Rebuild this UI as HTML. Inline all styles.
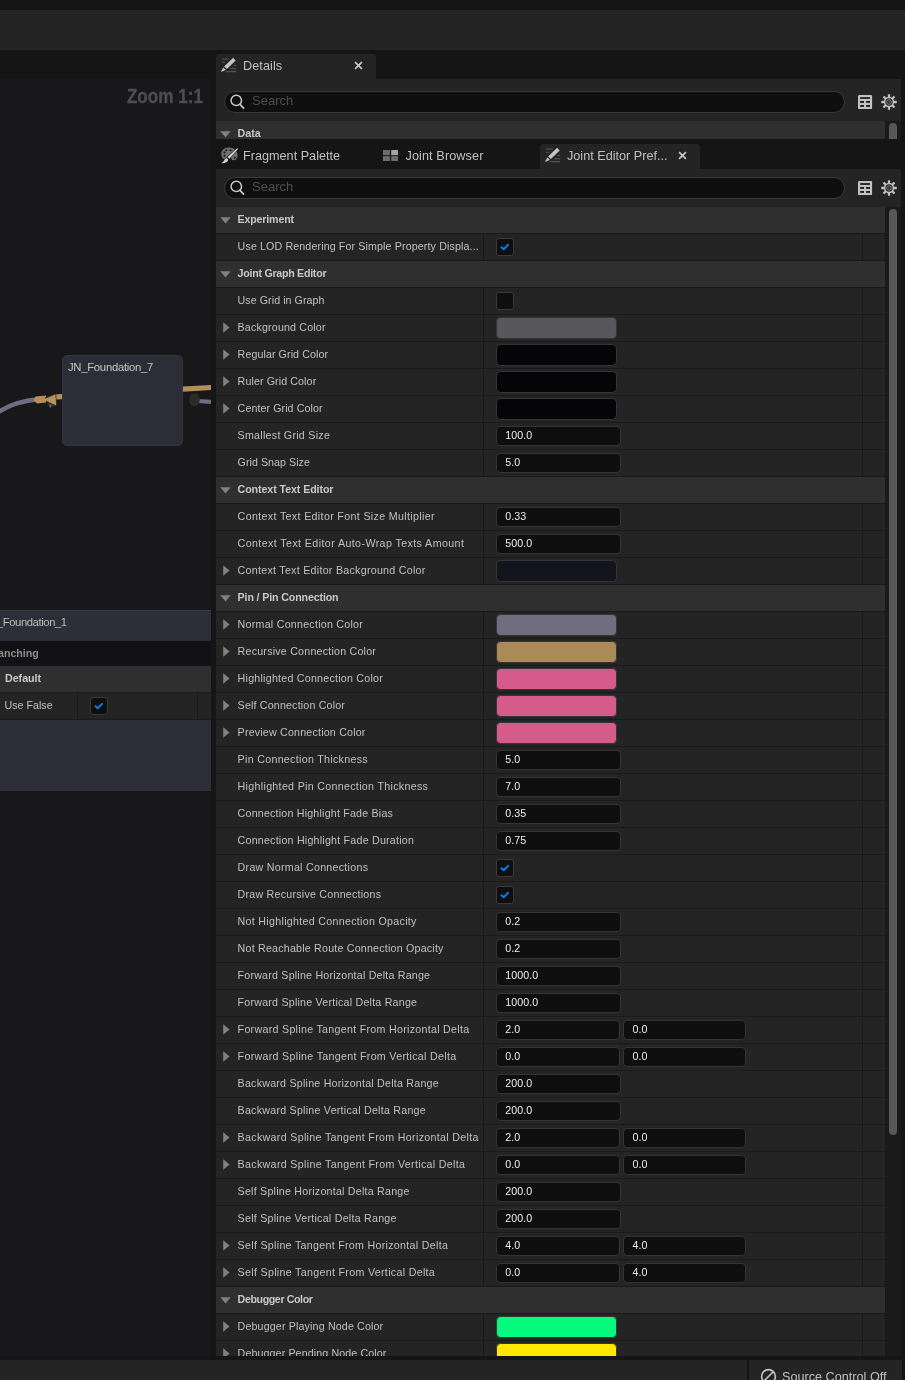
<!DOCTYPE html><html><head><meta charset="utf-8"><title>Details</title><style>
html,body{margin:0;padding:0}
body{width:905px;height:1380px;overflow:hidden;position:relative;background:#151515;font-family:"Liberation Sans",sans-serif;color:#c0c0c0}
div,span,i,svg{position:absolute;display:block;box-sizing:border-box}
.topbar{left:0;top:10px;width:905px;height:40px;background:#242424}
.graph{left:0;top:79px;width:211px;height:1277px;background:#18181a;overflow:hidden}
.zoom{right:8.6px;top:5px;font-size:20px;line-height:24px;font-weight:700;color:#4e4e50;white-space:nowrap;transform:scaleX(.855);transform-origin:100% 50%;-webkit-text-stroke:.3px #4e4e50}
.node{left:62px;top:276px;width:121px;height:91px;background:#2c2d36;border:1px solid #34353e;border-radius:5px}
.node span{left:5px;top:4px;font-size:11.3px;line-height:14px;color:#c4c4c4;white-space:nowrap;letter-spacing:-.28px}
.big{left:0;top:531px;width:211px;height:181px;background:#2d2e38;box-shadow:inset 0 1px 0 #3a3b46}
.big .t{left:-3.2px;top:5px;font-size:11.3px;line-height:14px;color:#bcbcbc;white-space:nowrap;letter-spacing:-.42px}
.big .br{left:0;top:31px;width:211px;height:25px;background:#121216}
.big .br span{left:-2px;top:5px;font-size:10.67px;line-height:14px;font-weight:700;color:#8c8c8c;white-space:nowrap}
.big .dh{left:0;top:56px;width:211px;height:26px;background:#2f2f2f}
.big .dh span{left:5px;top:5px;font-size:10.67px;line-height:14px;font-weight:700;color:#c8c8c8;white-space:nowrap}
.big .ur{left:0;top:83px;width:211px;height:26px;background:#242424}
.big .ur .l{left:4.6px;top:5px;font-size:10.67px;line-height:14px;white-space:nowrap}
.big .ur i{top:0;width:1px;height:26px;background:#1a1a1a}
.big .sp{left:0;top:82px;width:211px;height:1px;background:#1a1a1a}
.big .sp2{left:0;top:109px;width:211px;height:1px;background:#1a1a1a}
.tab{height:25px;background:#242424;border-radius:4px 4px 0 0}
.tl{font-size:12.67px;line-height:16px;white-space:nowrap;color:#c0c0c0}
.panel{background:#242424}
.sf{left:8px;width:621px;height:22px;border-radius:11px;background:#0f0f0f;border:1px solid #383838}
.sf .ph{left:27px;top:1px;font-size:13px;line-height:16px;color:#4e4e4e;white-space:nowrap}
.si{left:5px;top:1.9px}
.row{left:216px;width:669px;height:26px;background:#242424}
.row.hd{background:#2f2f2f}
.lb{left:21.6px;top:5px;font-size:10.67px;line-height:14px;white-space:nowrap;color:#c0c0c0}
.lb.b{font-weight:700;color:#c8c8c8}
.ad{left:4.3px;top:9.6px}
.ar{left:6.8px;top:7.4px}
.d1{left:267px;top:0;width:1px;height:26px;background:#1a1a1a}
.d2{left:646px;top:0;width:1px;height:26px;background:#1a1a1a}
.cb{left:280.3px;top:4.1px;width:17.5px;height:17.5px;border-radius:3px;background:#0f0f0f;border:1px solid #3a3a3a}
.ck{left:-1px;top:-1px}
.sw{left:280.2px;top:2.3px;width:120.4px;height:21.3px;border-radius:4.5px;border:1px solid #353535}
.nf{top:3.2px;height:19.7px;border-radius:4px;background:#0f0f0f;border:1px solid #343434;font-size:10.67px;line-height:16px;color:#ececec;padding-left:8px;letter-spacing:.1px;white-space:nowrap}
.n1{left:280.2px;width:124.4px}
.n2a{left:280.2px;width:123.8px}
.n2b{left:407.4px;width:122.2px}
.track{left:885px;width:16px;background:#1a1a1a}
.thumb{left:4px;width:8px;border-radius:4px;background:#585858}
.status{top:1360px;height:20px;background:#242424}
</style></head><body>
<div id="w" style="left:0;top:0;width:905px;height:1380px;will-change:transform">
<div class="topbar"></div>
<div class="graph">
<svg width="211" height="1277" viewBox="0 79 211 1277" style="left:0;top:0">
<path d="M-2 412.4 C7 406.2 19 401.2 38 399.3" fill="none" stroke="#6d6c82" stroke-width="4.4"/>
<path d="M33.6 400.6 L35.4 396.6 L46 395.6 L46 402.5 L37.1 403.4 Z" fill="#b48f58"/>
<path d="M44.8 397.4 L55.9 393.6 L57 404.4 L50 408.4 L47.6 403.5 Z" fill="#303036"/>
<path d="M49 405.2 L50.4 408 L51.4 404.6 Z" fill="#6d6c82"/>
<path d="M43.6 399.4 L55.4 394.4 L56.2 405.6 Z" fill="#b8935a"/>
<path d="M56.2 394.2 L62 393.9 L62 399.2 L56.4 399.5 Z" fill="#b48f58"/>
<path d="M183 386.6 L211 385 L211 390 L183 391.8 Z" fill="#b48f58"/>
<path d="M197 401 L211 401.8" stroke="#6d6c82" stroke-width="4.2" fill="none"/>
<rect x="189.3" y="393.6" width="10.2" height="12.6" rx="4.8" fill="#2b2b2b"/>
</svg>
<span class="zoom">Zoom 1:1</span>
<div class="node"><span id="nodeT">JN_Foundation_7</span></div>
<div class="big"><span class="t" id="bigT">_Foundation_1</span>
<div class="br"><span id="brT">anching</span></div>
<div class="dh"><span id="dhT">Default</span></div>
<div class="sp"></div>
<div class="ur"><span class="l" id="urT">Use False</span><i style="left:77px"></i><i style="left:197px"></i><span class="cb" style="left:90px"><svg class="ck" width="18" height="18" viewBox="0 0 18 18"><path d="M5.5 9.2 L7.7 11.3 L12.1 6.9" fill="none" stroke="#0a7cf0" stroke-width="2" stroke-linecap="round" stroke-linejoin="round"/></svg></span></div>
<div class="sp2"></div>
</div>
</div>
<div class="tab" style="left:216px;top:54px;width:160px"><svg class="pen" style="left:4.2px;top:3px" width="17" height="16" viewBox="0 0 17 16">
<g stroke="#4c4c4c" stroke-width="1.3"><path d="M1.9 2.05H8.7M1.9 5.4H5.1"/></g>
<g stroke="#555" stroke-width="1.2"><path d="M13.4 8.5H16.1M10.2 11.6H16.1M6.2 14.7H16.1"/></g>
<path d="M13.1 0.7 L15.7 3.4 L6.9 12.0 L4.1 9.4 Z" fill="#c4c4c4"/>
<path d="M3.4 10.5 L5.9 13.1 L0.8 14.9 Z" fill="#c4c4c4"/>
</svg><span class="tl" id="T0" style="left:27px;top:4px;letter-spacing:.08px">Details</span><svg class="cx" style="left:137.5px;top:7.1px" width="9" height="9" viewBox="0 0 9 9"><path d="M1.1 1.1 L7.9 7.9 M7.9 1.1 L1.1 7.9" stroke="#c8c8c8" stroke-width="1.7" fill="none"/></svg></div>
<div class="panel" style="left:216px;top:79px;width:685px;height:60px"><div class="sf" style="top:12px"><svg class="si" width="15" height="16" viewBox="0 0 15 16"><circle cx="6.3" cy="6.4" r="5.2" fill="none" stroke="#c8c8c8" stroke-width="1.5"/><path d="M10 10.3 L13.6 14.1" stroke="#c8c8c8" stroke-width="1.7" stroke-linecap="round"/></svg><span class="ph">Search</span></div><svg class="ti" style="left:642px;top:15.9px;overflow:visible" width="14" height="14" viewBox="0 0 14 14"><rect x="0" y="0" width="14.1" height="14.1" rx="1.2" fill="#c2c2c2"/>
<g fill="#0c0c0c"><rect x="2.1" y="2.2" width="9.9" height="1.6"/><rect x="2.1" y="6.1" width="3.9" height="1.7"/><rect x="8.1" y="6.1" width="3.9" height="1.7"/><rect x="2.1" y="10.1" width="3.9" height="1.7"/><rect x="8.1" y="10.1" width="3.9" height="1.7"/></g></svg><svg class="gi" style="left:665.2px;top:14.7px" width="16" height="16" viewBox="0 0 16 16"><g fill="#c2c2c2"><rect x="-1.15" y="-7.8" width="2.3" height="3.6" rx="0.4" transform="translate(8.0 8.0) rotate(0)"/><rect x="-1.15" y="-7.8" width="2.3" height="3.6" rx="0.4" transform="translate(8.0 8.0) rotate(45)"/><rect x="-1.15" y="-7.8" width="2.3" height="3.6" rx="0.4" transform="translate(8.0 8.0) rotate(90)"/><rect x="-1.15" y="-7.8" width="2.3" height="3.6" rx="0.4" transform="translate(8.0 8.0) rotate(135)"/><rect x="-1.15" y="-7.8" width="2.3" height="3.6" rx="0.4" transform="translate(8.0 8.0) rotate(180)"/><rect x="-1.15" y="-7.8" width="2.3" height="3.6" rx="0.4" transform="translate(8.0 8.0) rotate(225)"/><rect x="-1.15" y="-7.8" width="2.3" height="3.6" rx="0.4" transform="translate(8.0 8.0) rotate(270)"/><rect x="-1.15" y="-7.8" width="2.3" height="3.6" rx="0.4" transform="translate(8.0 8.0) rotate(315)"/></g>
<circle cx="8" cy="8" r="4.4" fill="none" stroke="#c2c2c2" stroke-width="1.5"/><circle cx="8" cy="8" r="2.3" fill="none" stroke="#8a8a8a" stroke-width="0.9"/><circle cx="8" cy="8" r="1.2" fill="#444"/></svg><div style="left:0;top:42px;width:669px;height:18px;background:#2f2f2f;overflow:hidden"><svg class="ad" style="top:9.7px" width="11" height="7" viewBox="0 0 11 7"><path d="M0.3 0.3 L10.7 0.3 L5.5 6.6 Z" fill="#808080"/></svg><span class="lb b" id="DataL" style="top:4.5px">Data</span></div><div class="track" style="left:669px;top:42px;height:18px;overflow:hidden"><div class="thumb" style="top:1.6px;height:40px"></div></div></div>
<div style="left:216px;top:144px;width:160px;height:25px"><svg class="pal" style="left:4.6px;top:2.6px" width="18" height="17" viewBox="0 0 18 17">
<path d="M7.6 0.5 C3.2 0.5 0.3 3.4 0.3 6.9 C0.3 10.2 2.6 12.6 5.4 12.9 L8 10.4 L10.2 10.4 C10 11.6 10.6 13.2 12.6 13.3 C14.8 13.3 16.6 11.4 16.6 8.4 C16.6 3.8 12.6 0.5 7.6 0.5 Z" fill="#707070"/>
<g fill="#161616"><circle cx="5.3" cy="3.2" r="1.05"/><circle cx="9.5" cy="3.2" r="1.05"/><circle cx="3.4" cy="5.5" r="1.05"/><circle cx="3.4" cy="8.7" r="1.05"/><path d="M13.8 9.6 L15 10.8 L13.8 12 L12.6 10.8 Z"/></g>
<path d="M16.4 0.5 L17.6 1.7 L8.4 12.6 L5.6 10 Z" fill="#161616"/>
<path d="M16.2 1.3 L17 2.1 L8.4 11.7 L6.5 9.9 Z" fill="#d4d4d4"/>
<path d="M5.2 10.2 L8 12.8 C7.4 15.6 4.2 17 0.2 16.4 C2.7 15.2 3 11.8 5.2 10.2 Z" fill="#161616"/>
<path d="M5.5 11.1 L7.3 12.8 C6.6 15.2 3.6 16.4 0.5 16.1 C2.9 15 3.5 12.2 5.5 11.1 Z" fill="#d4d4d4"/>
</svg><span class="tl" id="T1" style="left:27px;top:4px">Fragment Palette</span></div>
<div style="left:378px;top:144px;width:160px;height:25px"><svg class="g4" style="left:4.9px;top:6px" width="16" height="12" viewBox="0 0 16 12"><rect x="0" y="0" width="6.9" height="5.2" fill="#6c6c6c"/><rect x="8.2" y="0" width="6.8" height="5.2" fill="#a4a4a4"/><rect x="0" y="6.2" width="6.9" height="4.8" fill="#6c6c6c"/><rect x="8.2" y="6.2" width="6.8" height="4.8" fill="#6c6c6c"/></svg><span class="tl" id="T2" style="left:27.5px;top:4px;letter-spacing:.1px">Joint Browser</span></div>
<div class="tab" style="left:540px;top:144px;width:160px"><svg class="pen" style="left:4.2px;top:3px" width="17" height="16" viewBox="0 0 17 16">
<g stroke="#4c4c4c" stroke-width="1.3"><path d="M1.9 2.05H8.7M1.9 5.4H5.1"/></g>
<g stroke="#555" stroke-width="1.2"><path d="M13.4 8.5H16.1M10.2 11.6H16.1M6.2 14.7H16.1"/></g>
<path d="M13.1 0.7 L15.7 3.4 L6.9 12.0 L4.1 9.4 Z" fill="#c4c4c4"/>
<path d="M3.4 10.5 L5.9 13.1 L0.8 14.9 Z" fill="#c4c4c4"/>
</svg><span class="tl" id="T3" style="left:27px;top:4px">Joint Editor Pref...</span><svg class="cx" style="left:137.5px;top:7.1px" width="9" height="9" viewBox="0 0 9 9"><path d="M1.1 1.1 L7.9 7.9 M7.9 1.1 L1.1 7.9" stroke="#c8c8c8" stroke-width="1.7" fill="none"/></svg></div>
<div class="panel" style="left:216px;top:169px;width:685px;height:1187px"><div class="sf" style="top:8px"><svg class="si" width="15" height="16" viewBox="0 0 15 16"><circle cx="6.3" cy="6.4" r="5.2" fill="none" stroke="#c8c8c8" stroke-width="1.5"/><path d="M10 10.3 L13.6 14.1" stroke="#c8c8c8" stroke-width="1.7" stroke-linecap="round"/></svg><span class="ph">Search</span></div><svg class="ti" style="left:642px;top:11.9px;overflow:visible" width="14" height="14" viewBox="0 0 14 14"><rect x="0" y="0" width="14.1" height="14.1" rx="1.2" fill="#c2c2c2"/>
<g fill="#0c0c0c"><rect x="2.1" y="2.2" width="9.9" height="1.6"/><rect x="2.1" y="6.1" width="3.9" height="1.7"/><rect x="8.1" y="6.1" width="3.9" height="1.7"/><rect x="2.1" y="10.1" width="3.9" height="1.7"/><rect x="8.1" y="10.1" width="3.9" height="1.7"/></g></svg><svg class="gi" style="left:665.2px;top:10.7px" width="16" height="16" viewBox="0 0 16 16"><g fill="#c2c2c2"><rect x="-1.15" y="-7.8" width="2.3" height="3.6" rx="0.4" transform="translate(8.0 8.0) rotate(0)"/><rect x="-1.15" y="-7.8" width="2.3" height="3.6" rx="0.4" transform="translate(8.0 8.0) rotate(45)"/><rect x="-1.15" y="-7.8" width="2.3" height="3.6" rx="0.4" transform="translate(8.0 8.0) rotate(90)"/><rect x="-1.15" y="-7.8" width="2.3" height="3.6" rx="0.4" transform="translate(8.0 8.0) rotate(135)"/><rect x="-1.15" y="-7.8" width="2.3" height="3.6" rx="0.4" transform="translate(8.0 8.0) rotate(180)"/><rect x="-1.15" y="-7.8" width="2.3" height="3.6" rx="0.4" transform="translate(8.0 8.0) rotate(225)"/><rect x="-1.15" y="-7.8" width="2.3" height="3.6" rx="0.4" transform="translate(8.0 8.0) rotate(270)"/><rect x="-1.15" y="-7.8" width="2.3" height="3.6" rx="0.4" transform="translate(8.0 8.0) rotate(315)"/></g>
<circle cx="8" cy="8" r="4.4" fill="none" stroke="#c2c2c2" stroke-width="1.5"/><circle cx="8" cy="8" r="2.3" fill="none" stroke="#8a8a8a" stroke-width="0.9"/><circle cx="8" cy="8" r="1.2" fill="#444"/></svg><div style="left:0;top:38px;width:669px;height:1149px;background:#1a1a1a"></div><div class="track" style="left:669px;top:38px;height:1149px"><div class="thumb" style="top:2px;height:926px"></div></div></div>
<div style="left:0;top:0;width:905px;height:1356px;overflow:hidden;background:transparent">
<div class="row hd" style="top:207px"><svg class="ad" width="11" height="7" viewBox="0 0 11 7"><path d="M0.3 0.3 L10.7 0.3 L5.5 6.6 Z" fill="#808080"/></svg><span class="lb b" id="L0" style="letter-spacing:-0.177px">Experiment</span></div>
<div class="row" style="top:234px"><span class="lb" id="L1" style="letter-spacing:0.13px">Use LOD Rendering For Simple Property Displa...</span><i class="d1"></i><i class="d2"></i><span class="cb"><svg class="ck" width="18" height="18" viewBox="0 0 18 18"><path d="M5.5 9.2 L7.7 11.3 L12.1 6.9" fill="none" stroke="#0a7cf0" stroke-width="2" stroke-linecap="round" stroke-linejoin="round"/></svg></span></div>
<div class="row hd" style="top:261px"><svg class="ad" width="11" height="7" viewBox="0 0 11 7"><path d="M0.3 0.3 L10.7 0.3 L5.5 6.6 Z" fill="#808080"/></svg><span class="lb b" id="L2" style="letter-spacing:-0.271px">Joint Graph Editor</span></div>
<div class="row" style="top:288px"><span class="lb" id="L3" style="letter-spacing:0.062px">Use Grid in Graph</span><i class="d1"></i><i class="d2"></i><span class="cb"></span></div>
<div class="row" style="top:315px"><svg class="ar" width="7" height="11" viewBox="0 0 7 11"><path d="M0.2 0.3 L6.6 5.5 L0.2 10.7 Z" fill="#808080"/></svg><span class="lb" id="L4" style="letter-spacing:0.173px">Background Color</span><i class="d1"></i><i class="d2"></i><span class="sw" style="background:#58585c"></span></div>
<div class="row" style="top:342px"><svg class="ar" width="7" height="11" viewBox="0 0 7 11"><path d="M0.2 0.3 L6.6 5.5 L0.2 10.7 Z" fill="#808080"/></svg><span class="lb" id="L5" style="letter-spacing:0.094px">Regular Grid Color</span><i class="d1"></i><i class="d2"></i><span class="sw" style="background:#050508"></span></div>
<div class="row" style="top:369px"><svg class="ar" width="7" height="11" viewBox="0 0 7 11"><path d="M0.2 0.3 L6.6 5.5 L0.2 10.7 Z" fill="#808080"/></svg><span class="lb" id="L6" style="letter-spacing:0.107px">Ruler Grid Color</span><i class="d1"></i><i class="d2"></i><span class="sw" style="background:#050508"></span></div>
<div class="row" style="top:396px"><svg class="ar" width="7" height="11" viewBox="0 0 7 11"><path d="M0.2 0.3 L6.6 5.5 L0.2 10.7 Z" fill="#808080"/></svg><span class="lb" id="L7" style="letter-spacing:0.088px">Center Grid Color</span><i class="d1"></i><i class="d2"></i><span class="sw" style="background:#050508"></span></div>
<div class="row" style="top:423px"><span class="lb" id="L8" style="letter-spacing:0.271px">Smallest Grid Size</span><i class="d1"></i><i class="d2"></i><span class="nf n1">100.0</span></div>
<div class="row" style="top:450px"><span class="lb" id="L9" style="letter-spacing:0.046px">Grid Snap Size</span><i class="d1"></i><i class="d2"></i><span class="nf n1">5.0</span></div>
<div class="row hd" style="top:477px"><svg class="ad" width="11" height="7" viewBox="0 0 11 7"><path d="M0.3 0.3 L10.7 0.3 L5.5 6.6 Z" fill="#808080"/></svg><span class="lb b" id="L10" style="letter-spacing:-0.089px">Context Text Editor</span></div>
<div class="row" style="top:504px"><span class="lb" id="L11" style="letter-spacing:0.349px">Context Text Editor Font Size Multiplier</span><i class="d1"></i><i class="d2"></i><span class="nf n1">0.33</span></div>
<div class="row" style="top:531px"><span class="lb" id="L12" style="letter-spacing:0.405px">Context Text Editor Auto-Wrap Texts Amount</span><i class="d1"></i><i class="d2"></i><span class="nf n1">500.0</span></div>
<div class="row" style="top:558px"><svg class="ar" width="7" height="11" viewBox="0 0 7 11"><path d="M0.2 0.3 L6.6 5.5 L0.2 10.7 Z" fill="#808080"/></svg><span class="lb" id="L13" style="letter-spacing:0.275px">Context Text Editor Background Color</span><i class="d1"></i><i class="d2"></i><span class="sw" style="background:#14141e"></span></div>
<div class="row hd" style="top:585px"><svg class="ad" width="11" height="7" viewBox="0 0 11 7"><path d="M0.3 0.3 L10.7 0.3 L5.5 6.6 Z" fill="#808080"/></svg><span class="lb b" id="L14" style="letter-spacing:-0.137px">Pin / Pin Connection</span></div>
<div class="row" style="top:612px"><svg class="ar" width="7" height="11" viewBox="0 0 7 11"><path d="M0.2 0.3 L6.6 5.5 L0.2 10.7 Z" fill="#808080"/></svg><span class="lb" id="L15" style="letter-spacing:0.255px">Normal Connection Color</span><i class="d1"></i><i class="d2"></i><span class="sw" style="background:#6f6e7f"></span></div>
<div class="row" style="top:639px"><svg class="ar" width="7" height="11" viewBox="0 0 7 11"><path d="M0.2 0.3 L6.6 5.5 L0.2 10.7 Z" fill="#808080"/></svg><span class="lb" id="L16" style="letter-spacing:0.224px">Recursive Connection Color</span><i class="d1"></i><i class="d2"></i><span class="sw" style="background:#aa8a57"></span></div>
<div class="row" style="top:666px"><svg class="ar" width="7" height="11" viewBox="0 0 7 11"><path d="M0.2 0.3 L6.6 5.5 L0.2 10.7 Z" fill="#808080"/></svg><span class="lb" id="L17" style="letter-spacing:0.244px">Highlighted Connection Color</span><i class="d1"></i><i class="d2"></i><span class="sw" style="background:#d55b8b"></span></div>
<div class="row" style="top:693px"><svg class="ar" width="7" height="11" viewBox="0 0 7 11"><path d="M0.2 0.3 L6.6 5.5 L0.2 10.7 Z" fill="#808080"/></svg><span class="lb" id="L18" style="letter-spacing:0.18px">Self Connection Color</span><i class="d1"></i><i class="d2"></i><span class="sw" style="background:#d55b8b"></span></div>
<div class="row" style="top:720px"><svg class="ar" width="7" height="11" viewBox="0 0 7 11"><path d="M0.2 0.3 L6.6 5.5 L0.2 10.7 Z" fill="#808080"/></svg><span class="lb" id="L19" style="letter-spacing:0.2px">Preview Connection Color</span><i class="d1"></i><i class="d2"></i><span class="sw" style="background:#d55b8b"></span></div>
<div class="row" style="top:747px"><span class="lb" id="L20" style="letter-spacing:0.304px">Pin Connection Thickness</span><i class="d1"></i><i class="d2"></i><span class="nf n1">5.0</span></div>
<div class="row" style="top:774px"><span class="lb" id="L21" style="letter-spacing:0.314px">Highlighted Pin Connection Thickness</span><i class="d1"></i><i class="d2"></i><span class="nf n1">7.0</span></div>
<div class="row" style="top:801px"><span class="lb" id="L22" style="letter-spacing:0.207px">Connection Highlight Fade Bias</span><i class="d1"></i><i class="d2"></i><span class="nf n1">0.35</span></div>
<div class="row" style="top:828px"><span class="lb" id="L23" style="letter-spacing:0.224px">Connection Highlight Fade Duration</span><i class="d1"></i><i class="d2"></i><span class="nf n1">0.75</span></div>
<div class="row" style="top:855px"><span class="lb" id="L24" style="letter-spacing:0.273px">Draw Normal Connections</span><i class="d1"></i><i class="d2"></i><span class="cb"><svg class="ck" width="18" height="18" viewBox="0 0 18 18"><path d="M5.5 9.2 L7.7 11.3 L12.1 6.9" fill="none" stroke="#0a7cf0" stroke-width="2" stroke-linecap="round" stroke-linejoin="round"/></svg></span></div>
<div class="row" style="top:882px"><span class="lb" id="L25" style="letter-spacing:0.24px">Draw Recursive Connections</span><i class="d1"></i><i class="d2"></i><span class="cb"><svg class="ck" width="18" height="18" viewBox="0 0 18 18"><path d="M5.5 9.2 L7.7 11.3 L12.1 6.9" fill="none" stroke="#0a7cf0" stroke-width="2" stroke-linecap="round" stroke-linejoin="round"/></svg></span></div>
<div class="row" style="top:909px"><span class="lb" id="L26" style="letter-spacing:0.303px">Not Highlighted Connection Opacity</span><i class="d1"></i><i class="d2"></i><span class="nf n1">0.2</span></div>
<div class="row" style="top:936px"><span class="lb" id="L27" style="letter-spacing:0.216px">Not Reachable Route Connection Opacity</span><i class="d1"></i><i class="d2"></i><span class="nf n1">0.2</span></div>
<div class="row" style="top:963px"><span class="lb" id="L28" style="letter-spacing:0.211px">Forward Spline Horizontal Delta Range</span><i class="d1"></i><i class="d2"></i><span class="nf n1">1000.0</span></div>
<div class="row" style="top:990px"><span class="lb" id="L29" style="letter-spacing:0.224px">Forward Spline Vertical Delta Range</span><i class="d1"></i><i class="d2"></i><span class="nf n1">1000.0</span></div>
<div class="row" style="top:1017px"><svg class="ar" width="7" height="11" viewBox="0 0 7 11"><path d="M0.2 0.3 L6.6 5.5 L0.2 10.7 Z" fill="#808080"/></svg><span class="lb" id="L30" style="letter-spacing:0.293px">Forward Spline Tangent From Horizontal Delta</span><i class="d1"></i><i class="d2"></i><span class="nf n2a">2.0</span><span class="nf n2b">0.0</span></div>
<div class="row" style="top:1044px"><svg class="ar" width="7" height="11" viewBox="0 0 7 11"><path d="M0.2 0.3 L6.6 5.5 L0.2 10.7 Z" fill="#808080"/></svg><span class="lb" id="L31" style="letter-spacing:0.307px">Forward Spline Tangent From Vertical Delta</span><i class="d1"></i><i class="d2"></i><span class="nf n2a">0.0</span><span class="nf n2b">0.0</span></div>
<div class="row" style="top:1071px"><span class="lb" id="L32" style="letter-spacing:0.232px">Backward Spline Horizontal Delta Range</span><i class="d1"></i><i class="d2"></i><span class="nf n1">200.0</span></div>
<div class="row" style="top:1098px"><span class="lb" id="L33" style="letter-spacing:0.246px">Backward Spline Vertical Delta Range</span><i class="d1"></i><i class="d2"></i><span class="nf n1">200.0</span></div>
<div class="row" style="top:1125px"><svg class="ar" width="7" height="11" viewBox="0 0 7 11"><path d="M0.2 0.3 L6.6 5.5 L0.2 10.7 Z" fill="#808080"/></svg><span class="lb" id="L34" style="letter-spacing:0.323px">Backward Spline Tangent From Horizontal Delta</span><i class="d1"></i><i class="d2"></i><span class="nf n2a">2.0</span><span class="nf n2b">0.0</span></div>
<div class="row" style="top:1152px"><svg class="ar" width="7" height="11" viewBox="0 0 7 11"><path d="M0.2 0.3 L6.6 5.5 L0.2 10.7 Z" fill="#808080"/></svg><span class="lb" id="L35" style="letter-spacing:0.329px">Backward Spline Tangent From Vertical Delta</span><i class="d1"></i><i class="d2"></i><span class="nf n2a">0.0</span><span class="nf n2b">0.0</span></div>
<div class="row" style="top:1179px"><span class="lb" id="L36" style="letter-spacing:0.236px">Self Spline Horizontal Delta Range</span><i class="d1"></i><i class="d2"></i><span class="nf n1">200.0</span></div>
<div class="row" style="top:1206px"><span class="lb" id="L37" style="letter-spacing:0.252px">Self Spline Vertical Delta Range</span><i class="d1"></i><i class="d2"></i><span class="nf n1">200.0</span></div>
<div class="row" style="top:1233px"><svg class="ar" width="7" height="11" viewBox="0 0 7 11"><path d="M0.2 0.3 L6.6 5.5 L0.2 10.7 Z" fill="#808080"/></svg><span class="lb" id="L38" style="letter-spacing:0.3px">Self Spline Tangent From Horizontal Delta</span><i class="d1"></i><i class="d2"></i><span class="nf n2a">4.0</span><span class="nf n2b">4.0</span></div>
<div class="row" style="top:1260px"><svg class="ar" width="7" height="11" viewBox="0 0 7 11"><path d="M0.2 0.3 L6.6 5.5 L0.2 10.7 Z" fill="#808080"/></svg><span class="lb" id="L39" style="letter-spacing:0.316px">Self Spline Tangent From Vertical Delta</span><i class="d1"></i><i class="d2"></i><span class="nf n2a">0.0</span><span class="nf n2b">4.0</span></div>
<div class="row hd" style="top:1287px"><svg class="ad" width="11" height="7" viewBox="0 0 11 7"><path d="M0.3 0.3 L10.7 0.3 L5.5 6.6 Z" fill="#808080"/></svg><span class="lb b" id="L40" style="letter-spacing:-0.4px">Debugger Color</span></div>
<div class="row" style="top:1314px"><svg class="ar" width="7" height="11" viewBox="0 0 7 11"><path d="M0.2 0.3 L6.6 5.5 L0.2 10.7 Z" fill="#808080"/></svg><span class="lb" id="L41" style="letter-spacing:0.154px">Debugger Playing Node Color</span><i class="d1"></i><i class="d2"></i><span class="sw" style="background:#03fa7c"></span></div>
<div class="row" style="top:1341px"><svg class="ar" width="7" height="11" viewBox="0 0 7 11"><path d="M0.2 0.3 L6.6 5.5 L0.2 10.7 Z" fill="#808080"/></svg><span class="lb" id="L42" style="letter-spacing:0.115px">Debugger Pending Node Color</span><i class="d1"></i><i class="d2"></i><span class="sw" style="background:#ffe800"></span></div>
</div>
<div class="status" style="left:0;width:747px"></div>
<div class="status" style="left:749px;width:153px;overflow:hidden"><svg class="ns" style="left:10.9px;top:8.3px" width="17" height="17" viewBox="0 0 17 17"><circle cx="8.5" cy="8.5" r="6.9" fill="none" stroke="#c4c4c4" stroke-width="1.6"/><path d="M3.7 13.3 L13.3 3.7" stroke="#c4c4c4" stroke-width="1.6"/></svg><span class="tl" id="SC" style="left:33px;top:8.5px;font-size:12.67px;line-height:16px">Source Control Off</span></div>
</div></body></html>
